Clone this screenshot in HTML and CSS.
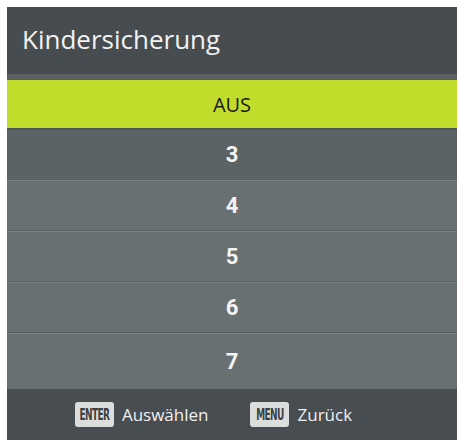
FILE: index.html
```html
<!DOCTYPE html>
<html lang="de">
<head>
    <meta charset="UTF-8">
    <title>Kindersicherung</title>
    <link rel="stylesheet" href="styles.css">
</head>
<body>

    <div class="menu">
        <div class="menu-title">Kindersicherung</div>

        <div class="menu-list">
            <div class="menu-item selected">AUS</div>
            <div class="menu-item first">3</div>
            <div class="menu-item">4</div>
            <div class="menu-item">5</div>
            <div class="menu-item">6</div>
            <div class="menu-item last">7</div>
        </div>

        <div class="menu-footer">
            <div class="hint">
                <span class="key"><span class="key-label">ENTER</span></span>
                <span class="hint-text">Auswählen</span>
            </div>
            <div class="hint">
                <span class="key"><span class="key-label">MENU</span></span>
                <span class="hint-text">Zurück</span>
            </div>
        </div>
    </div>

</body>
</html>
```

FILE: styles.css
```css
body {
    margin: 0;
    padding: 0;
    background: #ffffff;
    font-family: 'Open Sans', 'Noto Sans', sans-serif;
}

.menu {
    margin: 7px 0 0 7px;
    width: 450px;
    height: 433px;
    display: flex;
    flex-direction: column;
    background: #687072;
}

.menu-title {
    height: 73px;
    box-sizing: border-box;
    padding: 0 0 4px 15px;
    display: flex;
    align-items: center;
    background: #464c4f;
    color: #f2f2f2;
    font-size: 26px;
    font-weight: 400;
    border-bottom: 6px solid #5b6163;
}

.menu-list {
    display: flex;
    flex-direction: column;
}

.menu-item {
    height: 51px;
    box-sizing: border-box;
    display: flex;
    justify-content: center;
    align-items: center;
    color: #f4f4f4;
    font-family: 'Roboto', 'Liberation Sans', sans-serif;
    font-weight: bold;
    font-size: 22px;
    border-top: 1px solid #7b8284;
    border-bottom: 1px solid #5a6163;
}

.menu-item.selected {
    height: 50px;
    background: #c2dc2c;
    color: #1a1a1a;
    font-family: 'Open Sans', 'Noto Sans', sans-serif;
    font-weight: 400;
    font-size: 20px;
    border-top: none;
    border-bottom: 2px solid #4e5557;
}

.menu-item.first {
    height: 50px;
    background: #5c6365;
    border-top: none;
}

.menu-item.last {
    height: 56px;
    border-bottom: none;
}

.menu-footer {
    flex: 1;
    display: flex;
    justify-content: center;
    align-items: center;
    gap: 42px;
    padding-right: 37px;
    background: #474d50;
}

.hint {
    display: flex;
    align-items: center;
    gap: 8px;
}

.key {
    width: 39px;
    height: 25px;
    display: flex;
    justify-content: center;
    align-items: center;
    border-radius: 3px;
    background: #dcdedd;
    color: #3a3f41;
    font-family: 'DejaVu Sans Condensed', 'Liberation Sans Narrow', sans-serif;
    font-weight: bold;
    font-size: 10px;
    letter-spacing: -0.6px;
}

/* the remote's key caps use tall squeezed lettering */
.key-label {
    display: inline-block;
    transform: scaleY(1.5);
}

.hint-text {
    color: #f0f0f0;
    font-size: 17px;
}
```
